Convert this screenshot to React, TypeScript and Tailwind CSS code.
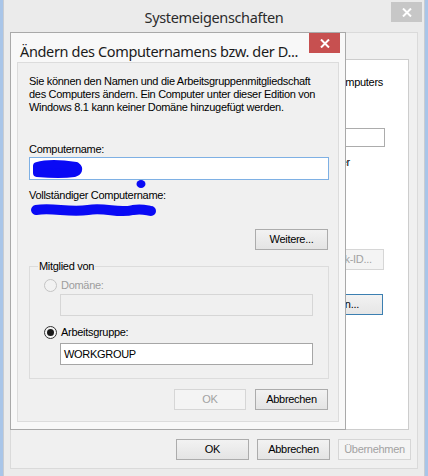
import type { ReactNode } from 'react';

const ui = "font-['Liberation_Sans',Arial,sans-serif] text-[11px] tracking-[-0.3px] leading-[13px]";
const title = "font-['Noto_Sans',sans-serif] text-[14.5px] tracking-[-0.35px] leading-[20px]";

function Btn({ children, disabled, def, className = '' }: { children: ReactNode; disabled?: boolean; def?: boolean; className?: string }) {
  const look = disabled
    ? 'border-[#d6d6d6] bg-[#f4f4f4] text-[#a2a2a2]'
    : def
      ? 'border-[#3c7fb1] bg-linear-to-b from-[#f2f2f2] to-[#e6e6e6] text-black'
      : 'border-[#acacac] bg-linear-to-b from-[#f2f2f2] to-[#e4e4e4] text-black';
  return (
    <div className={`h-[21px] border flex items-center justify-center whitespace-nowrap ${look} ${ui} ${className}`}>
      {children}
    </div>
  );
}

function Radio({ checked, disabled }: { checked?: boolean; disabled?: boolean }) {
  return (
    <span
      className={`w-[13px] h-[13px] rounded-full border flex items-center justify-center shrink-0 ${
        disabled ? 'border-[#c4c4c4] bg-[#f2f2f2]' : 'border-[#333] bg-linear-to-b from-[#f0f0f0] to-[#fafafa]'
      }`}
    >
      {checked && <span className="w-[7px] h-[7px] rounded-full bg-[#1a1a1a]" />}
    </span>
  );
}

function CloseX() {
  return (
    <svg width="10" height="9" viewBox="0 0 10 9">
      <path d="M1 0.5 L9 8.5 M9 0.5 L1 8.5" stroke="white" strokeWidth="2" />
    </svg>
  );
}

function ChangeNameDialog() {
  return (
    <div className="absolute left-[10px] top-[32px] w-[336px] h-[398px] bg-[#f8f8f8] border border-[#a9a9a9] flex flex-col">
      <div className="h-[29px] relative shrink-0">
        <div className={`absolute left-[9px] top-[8px] text-[#1b1b1b] ${title}`}>Ändern des Computernamens bzw. der D...</div>
        <div className="absolute right-[5px] top-0 w-[31px] h-[20px] bg-[#c75050] flex items-center justify-center">
          <CloseX />
        </div>
      </div>
      <div className={`relative mx-[6px] h-[360px] bg-[#f0f0f0] border border-[#dcdcdc] flex flex-col pl-[11px] pr-[9px] text-black ${ui}`}>
        <p className="pt-[12px]">
          Sie können den Namen und die Arbeitsgruppenmitgliedschaft
          <br />
          des Computers ändern. Ein Computer unter dieser Edition von
          <br />
          Windows 8.1 kann keiner Domäne hinzugefügt werden.
        </p>
        <div className="mt-[29px]">Computername:</div>
        <div className="mt-[1px] h-[23px] bg-white border border-[#7eb0e4]" />
        <div className="mt-[9px]">Vollständiger Computername:</div>
        <Btn className="mt-[27px] self-end w-[73px] mr-[1px]">Weitere...</Btn>

        <div className="relative mt-[16px] h-[113px] border border-[#dcdcdc] pl-[14px] pr-[15px] flex flex-col">
          <span className="absolute left-[8px] -top-[7px] bg-[#f0f0f0] px-[1px]">Mitglied von</span>
          <div className="mt-[12px] flex items-center gap-[4px] text-[#9d9d9d]">
            <Radio disabled />
            <span>Domäne:</span>
          </div>
          <div className="mt-[2px] ml-[16px] h-[22px] bg-[#f0f0f0] border border-[#d6d6d6]" />
          <div className="mt-[10px] flex items-center gap-[4px]">
            <Radio checked />
            <span>Arbeitsgruppe:</span>
          </div>
          <div className="mt-[4px] ml-[16px] h-[22px] bg-white border border-[#a6a6a6] flex items-center pl-[3px]">WORKGROUP</div>
        </div>

        <div className="mt-[10px] flex justify-end gap-[9px] pr-[1px]">
          <Btn disabled className="w-[72px]">OK</Btn>
          <Btn className="w-[73px]">Abbrechen</Btn>
        </div>

        <svg className="absolute left-0 top-0 pointer-events-none" width="322" height="200" viewBox="0 0 322 200">
          <path d="M19 103 C30 100 45 101 58 103 C62 106 60 109 56 110 C44 112 30 111 19 110 Z" fill="#0a0af5" stroke="#0a0af5" strokeWidth="8" strokeLinejoin="round" />
          <ellipse cx="123" cy="121" rx="4.5" ry="4" fill="#0a0af5" />
          <path d="M18 147 C35 144 50 150 70 147 C88 144 100 151 115 147 C125 145 130 148 133 148" fill="none" stroke="#0a0af5" strokeWidth="10" strokeLinecap="round" />
        </svg>
      </div>
    </div>
  );
}

export default function App() {
  return (
    <div className="relative w-[428px] h-[476px] overflow-hidden bg-[#a9c5e8] flex">
      <div className="w-[3px] shrink-0" />
      <div className="w-[422px] h-[476px] bg-[#ebebeb] border-l border-r border-[#c9ccd1] flex flex-col">
        <div className="h-[32px] relative shrink-0">
          <div className={`absolute left-0 right-0 top-[7px] text-center text-[#2b2b2b] ${title}`}>Systemeigenschaften</div>
          <div className="absolute right-[2px] top-[2px] w-[31px] h-[20px] bg-[#c7c7c7] flex items-center justify-center">
            <CloseX />
          </div>
        </div>
        <div className={`mx-[6px] h-[437px] bg-[#f0f0f0] border border-[#dadada] flex flex-col ${ui}`}>
          <div className="mt-[26px] ml-[6px] mr-[8px] h-[371px] bg-white border border-[#cdcdcd] flex flex-col items-end pr-[25px] text-black">
            <div className="mt-[16px] whitespace-nowrap">Computers</div>
            <div className="mt-[39px] mr-[-2px] w-[140px] h-[19px] border border-[#acacac]" />
            <div className="mt-[9px] mr-[33px] whitespace-nowrap">oder</div>
            <Btn disabled className="mt-[80px] mr-[-1px] w-[90px]">Netzwerk-ID...</Btn>
            <Btn def className="mt-[24px] w-[90px]">Ändern...</Btn>
          </div>
          <div className="mt-[9px] flex justify-end gap-[8px] pr-[6px]">
            <Btn className="w-[73px]">OK</Btn>
            <Btn className="w-[73px]">Abbrechen</Btn>
            <Btn disabled className="w-[73px]">Übernehmen</Btn>
          </div>
        </div>
      </div>
      <ChangeNameDialog />
    </div>
  );
}
